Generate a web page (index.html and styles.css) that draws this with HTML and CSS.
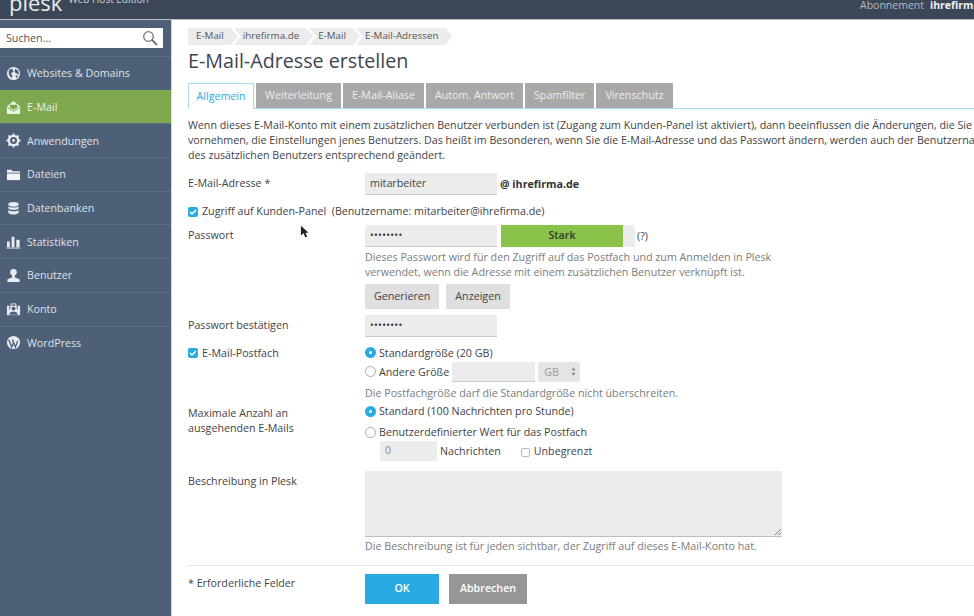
FILE: index.html
```html
<!DOCTYPE html>
<html lang="de">
<head>
<meta charset="utf-8">
<title>E-Mail-Adresse erstellen</title>
<link rel="stylesheet" href="styles.css">
</head>
<body>
<header class="topbar">
  <div class="brand"><span class="logo">plesk</span><span class="edition">Web Host Edition</span></div>
  <div class="account"><span class="sub-label">Abonnement</span><b>ihrefirma.de</b></div>
</header>
<div class="layout">
  <aside class="sidebar">
    <div class="search"><span>Suchen...</span>
      <svg class="search-icon" viewBox="0 0 16 16"><circle cx="6.5" cy="6.5" r="4.8" fill="none" stroke="#777" stroke-width="1.3"/><path d="M10 10l5 5" stroke="#777" stroke-width="2"/></svg>
    </div>
    <nav class="nav">
      <a class="nav-item"><svg viewBox="0 0 16 16"><circle cx="8" cy="8" r="7" fill="#e8ebef"/><path d="M3 4l4-1 1 3-3 2 2 2-1 3-3-4zM10 3l3 2 1 4-3-1-2-2zM10 10l3 0-2 3z" fill="#4e5f78"/></svg>Websites &amp; Domains</a>
      <a class="nav-item active"><svg viewBox="0 0 16 16"><path d="M1 7l7-6 7 6v7a1 1 0 0 1-1 1H2a1 1 0 0 1-1-1z" fill="#eef3ea"/><path d="M4 5h8v3l-4 2.500-4-2.500z" fill="#7ea84f"/><path d="M1.500 8L8 12l6.500-4" fill="none" stroke="#7ea84f"/></svg>E-Mail</a>
      <a class="nav-item"><svg viewBox="0 0 16 16"><circle cx="8" cy="8" r="5" fill="none" stroke="#e8ebef" stroke-width="2.500"/><circle cx="8" cy="8" r="1.500" fill="#e8ebef"/><path d="M8 0.500v3M8 12.500v3M0.500 8h3M12.500 8h3M2.700 2.700l2.100 2.100M11.200 11.200l2.100 2.100M2.700 13.300l2.100-2.100M11.200 4.800l2.100-2.100" stroke="#e8ebef" stroke-width="2"/></svg>Anwendungen</a>
      <a class="nav-item"><svg viewBox="0 0 16 16"><path d="M1 3h5l1 1.500h8V6H1z" fill="#e8ebef"/><path d="M1 7h14v7H1z" fill="#f4f5f7"/></svg>Dateien</a>
      <a class="nav-item"><svg viewBox="0 0 16 16"><ellipse cx="8" cy="3.500" rx="5.500" ry="2.500" fill="#e8ebef"/><path d="M2.500 5.500c1 2 10 2 11 0V8c-1 2-10 2-11 0zM2.500 9.500c1 2 10 2 11 0V12.500c-1 2.500-10 2.500-11 0z" fill="#e8ebef"/></svg>Datenbanken</a>
      <a class="nav-item"><svg viewBox="0 0 16 16"><path d="M1 8h3v6H1zM6 3h3v11H6zM11 6h3.500v8H11z" fill="#e8ebef"/><path d="M0.500 15h15" stroke="#e8ebef"/></svg>Statistiken</a>
      <a class="nav-item"><svg viewBox="0 0 16 16"><circle cx="8" cy="4.500" r="3.500" fill="#e8ebef"/><path d="M6.500 7.500h3V10l5 2v3H1.500v-3l5-2z" fill="#e8ebef"/></svg>Benutzer</a>
      <a class="nav-item"><svg viewBox="0 0 16 16"><path d="M1 4h14v10H1z" fill="#e8ebef"/><path d="M5.500 4V2h5v2" fill="none" stroke="#e8ebef"/><circle cx="8" cy="7" r="2" fill="#4e5f78"/><path d="M4 13c0-3 8-3 8 0zM4 4v4M12 4v4" fill="#4e5f78" stroke="#4e5f78"/></svg>Konto</a>
      <a class="nav-item"><svg viewBox="0 0 16 16"><circle cx="8" cy="8" r="7" fill="#e8ebef"/><path d="M3 5l3 8 2-5-1-3M7 5l3 8 2.500-6.500" fill="none" stroke="#4e5f78" stroke-width="1.400"/></svg>WordPress</a>
    </nav>
  </aside>
  <main class="main">
    <ol class="crumbs">
      <li>E-Mail</li><li>ihrefirma.de</li><li>E-Mail</li><li>E-Mail-Adressen</li>
    </ol>
    <h1 class="title">E-Mail-Adresse erstellen</h1>
    <div class="tabs">
      <a class="tab current">Allgemein</a><a class="tab">Weiterleitung</a><a class="tab">E-Mail-Aliase</a><a class="tab">Autom. Antwort</a><a class="tab">Spamfilter</a><a class="tab">Virenschutz</a>
    </div>
    <p class="intro">Wenn dieses E-Mail-Konto mit einem zusätzlichen Benutzer verbunden ist (Zugang zum Kunden-Panel ist aktiviert), dann beeinflussen die Änderungen, die Sie<br>vornehmen, die Einstellungen jenes Benutzers. Das heißt im Besonderen, wenn Sie die E-Mail-Adresse und das Passwort ändern, werden auch der Benutzername und das Passwort<br>des zusätzlichen Benutzers entsprechend geändert.</p>

    <div class="row row-mail">
      <label class="label">E-Mail-Adresse *</label>
      <div class="field inline"><span class="input">mitarbeiter</span><b class="domain">@ ihrefirma.de</b></div>
    </div>
    <div class="check-row row-panel">
      <span class="check"><svg viewBox="0 0 10 10"><path d="M2 5l2 2 4-4" fill="none" stroke="#fff" stroke-width="1.500"/></svg></span>
      <span>Zugriff auf Kunden-Panel&nbsp; (Benutzername: mitarbeiter@ihrefirma.de)</span>
    </div>
    <div class="row row-pass">
      <label class="label">Passwort</label>
      <div class="field">
        <div class="inline"><span class="input dots">••••••••</span><span class="meter"><span class="meter-fill">Stark</span></span><span class="help">(?)</span></div>
        <p class="hint two">Dieses Passwort wird für den Zugriff auf das Postfach und zum Anmelden in Plesk<br>verwendet, wenn die Adresse mit einem zusätzlichen Benutzer verknüpft ist.</p>
        <div class="inline gap7"><span class="btn">Generieren</span><span class="btn">Anzeigen</span></div>
      </div>
    </div>
    <div class="row row-confirm">
      <label class="label">Passwort bestätigen</label>
      <div class="field"><span class="input dots">••••••••</span></div>
    </div>
    <div class="row row-box">
      <div class="check-row label"><span class="check"><svg viewBox="0 0 10 10"><path d="M2 5l2 2 4-4" fill="none" stroke="#fff" stroke-width="1.500"/></svg></span><span>E-Mail-Postfach</span></div>
      <div class="field">
        <div class="radio-line line-a"><span class="radio on"></span><span>Standardgröße (20 GB)</span></div>
        <div class="radio-line line-b"><span class="radio"></span><span>Andere Größe</span><span class="input small"></span><span class="select">GB<svg viewBox="0 0 6 10"><path d="M3 0l2.500 3.500h-5zM3 10L.5 6.500h5z" fill="#888"/></svg></span></div>
        <p class="hint one">Die Postfachgröße darf die Standardgröße nicht überschreiten.</p>
      </div>
    </div>
    <div class="row row-max">
      <label class="label lines">Maximale Anzahl an<br>ausgehenden E-Mails</label>
      <div class="field">
        <div class="radio-line line-c"><span class="radio on"></span><span>Standard (100 Nachrichten pro Stunde)</span></div>
        <div class="radio-line line-d"><span class="radio"></span><span>Benutzerdefinierter Wert für das Postfach</span></div>
        <div class="inline custom"><span class="input num">0</span><span>Nachrichten</span><span class="box"></span><span>Unbegrenzt</span></div>
      </div>
    </div>
    <div class="row row-desc">
      <label class="label">Beschreibung in Plesk</label>
      <div class="field">
        <div class="textarea"><svg viewBox="0 0 8 8"><path d="M1 7l6-6M4.500 7L7 4.500" stroke="#777" fill="none"/></svg></div>
        <p class="hint one desc-hint">Die Beschreibung ist für jeden sichtbar, der Zugriff auf dieses E-Mail-Konto hat.</p>
      </div>
    </div>
    <div class="row footer">
      <label class="label">* Erforderliche Felder</label>
      <div class="field inline gap10"><span class="action ok">OK</span><span class="action cancel">Abbrechen</span></div>
    </div>
    <svg class="pointer" viewBox="0 0 10 14"><path d="M1 0v11l3-2.500 2 4.500 2-1-2-4.200h3.500z" fill="#222"/></svg>
  </main>
</div>
</body>
</html>
```
FILE: styles.css
```css
* { box-sizing: border-box; }
html, body { height: 100%; }
body {
  margin: 0;
  width: 974px;
  height: 616px;
  overflow: hidden;
  font-family: "Open Sans", "Liberation Sans", sans-serif;
  font-size: 10.7px;
  color: #3f4347;
  background: #fff;
  display: flex;
  flex-direction: column;
}
p { margin: 0; }

.topbar {
  height: 20px;
  flex: none;
  background: #3b4757;
  border-bottom: 1px solid #b9bdc2;
  display: flex;
  justify-content: space-between;
  overflow: hidden;
  color: #fff;
}
.brand { display: flex; align-items: flex-end; padding-left: 9px; height: 19px; }
.logo { font-size: 22px; line-height: 22px; margin-bottom: 6px; color: #e6ecf2; }
.edition { font-size: 10px; line-height: 10px; margin: 0 0 15px 6px; color: #cdd3da; }
.account { font-size: 10.5px; line-height: 10px; white-space: nowrap; width: 114px; display: flex; gap: 6px; }
.sub-label { color: #b6bcc4; }
.account b { color: #eef0f2; }

.layout { flex: 1; display: flex; min-height: 0; }
.sidebar { width: 172px; flex: none; background: #4e5f78; border-right: 1px solid #d6dade; padding-top: 8px; }
.search {
  width: 163px; height: 20px; background: #fff;
  display: flex; align-items: center; justify-content: space-between;
  padding: 0 5px 0 6px; color: #555;
}
.search-icon { width: 16px; height: 16px; }
.nav { margin-top: 8px; }
.nav-item {
  height: 33.7px;
  display: flex; align-items: center; gap: 6px;
  padding-left: 6px;
  border-top: 1px dotted #6b7a8e;
  color: #dfe3e8;
  white-space: nowrap;
}
.nav-item svg { width: 15px; height: 15px; flex: none; }
.nav-item.active { background: #7ea84f; border-top-color: #7ea84f; color: #eef3ea; }

.main { flex: 1; min-width: 0; padding: 8px 0 0 16px; position: relative; }
.crumbs { list-style: none; display: flex; margin: 0; padding: 0; height: 17px; }
.crumbs li {
  background: #ececec;
  height: 17px; line-height: 16px;
  padding: 0 14px 0 9px;
  color: #555; font-size: 9.8px;
  clip-path: polygon(0 0, calc(100% - 7px) 0, 100% 50%, calc(100% - 7px) 100%, 0 100%, 7px 50%);
  margin-right: -4px;
}
.crumbs li:first-child { padding-left: 8px; clip-path: polygon(0 0, calc(100% - 7px) 0, 100% 50%, calc(100% - 7px) 100%, 0 100%); }
.title { margin: 2px 0 0; font-size: 19.7px; line-height: 27px; font-weight: 400; color: #3d4650; }
.tabs { display: flex; gap: 2px; margin-top: 9px; height: 26px; border-bottom: 1px solid #a9dcf2; width: 820px; }
.tab {
  height: 25px; line-height: 25px; padding: 0 9px;
  background: #a8a8a8; color: #eee; white-space: nowrap;
}
.tab.current { background: #fff; color: #29abe2; border: 1px solid #a9dcf2; border-bottom: 0; height: 26px; line-height: 24px; padding: 0 7.5px; }
.intro { margin-top: 9px; line-height: 15px; white-space: nowrap; }

.row { display: flex; }
.label { width: 177px; flex: none; }
.field { flex: none; width: 600px; }
.inline { display: flex; align-items: center; }
.gap7 { gap: 7px; }
.gap10 { gap: 10px; }
.input {
  display: block; width: 132px; height: 22px;
  background: #ececec; border-bottom: 1px solid #c9c9c9;
  padding: 0 5px; line-height: 21px; color: #444;
}
.dots { font-size: 10px; letter-spacing: 0.3px; color: #333; }
.domain { margin-left: 3px; color: #333; }
.row-mail { margin-top: 10px; line-height: 20px; }
.check-row { display: flex; align-items: center; gap: 4px; }
.row-panel { margin-top: 5px; height: 22px; }
.check {
  width: 10px; height: 10px; background: #29abe2; border-radius: 2px; flex: none; display: flex;
}
.row-panel .check { margin-top: 2px; }
.check svg { width: 10px; height: 10px; }
.row-pass { margin-top: 3px; line-height: 20px; }
.meter { display: block; margin-left: 4px; width: 134px; height: 22px; background: #ececec; }
.meter-fill { display: block; width: 122px; height: 22px; background: #8bc34a; text-align: center; line-height: 21px; color: #333; font-weight: 600; }
.help { margin-left: 2px; }
.hint { color: #7a7d80; line-height: 15px; }
.hint.two { margin-top: 3px; white-space: nowrap; }
.btn {
  height: 25px; line-height: 25px; padding: 0 9px; background: #dfdfdf; color: #444; margin-top: 4px;
}
.row-confirm { margin-top: 6px; line-height: 20px; }
.row-box { margin-top: 6px; }
.radio-line { display: flex; align-items: center; gap: 3px; white-space: nowrap; }
.radio {
  width: 11px; height: 11px; border-radius: 50%; border: 1px solid #aaa; background: #fff; flex: none;
}
.radio.on { background: #29abe2; border: 3px solid #29abe2; }
.radio.on::after { content: ""; display: block; width: 3px; height: 3px; margin: 1px; border-radius: 50%; background: #fff; }
.line-a { height: 19px; }
.line-b { height: 19px; }
.small { width: 83px; height: 20px; }
.select {
  width: 42px; height: 20px; background: #e4e4e4; border-radius: 3px; color: #999;
  display: flex; align-items: center; justify-content: space-between; padding: 0 4px 0 6px;
}
.select svg { width: 5px; height: 9px; }
.hint.one { margin-top: 5px; }
.row-box .label { align-self: flex-start; height: 20px; }
.row-max { margin-top: 0; }
.lines { line-height: 15px; padding-top: 5px; }
.line-c { height: 20px; }
.line-d { height: 20px; padding-top: 2px; }
.custom { padding-left: 15px; height: 20px; }
.num { width: 57px; height: 20px; line-height: 19px; color: #888; border-bottom: 0; margin-right: 3px; }
.box { width: 9px; height: 9px; border: 1px solid #bbb; border-radius: 2px; margin: 2px 4px 0 20px; }
.row-desc { margin-top: 10px; }
.row-desc .label { line-height: 20px; }
.textarea {
  width: 417px; height: 66px; background: #ececec; border-bottom: 1px solid #bdbdbd;
  display: flex; justify-content: flex-end; align-items: flex-end;
}
.textarea svg { width: 8px; height: 8px; }
.hint.desc-hint { margin-top: 2px; }
.footer { margin-top: 11px; padding-top: 8px; border-top: 1px solid #e6e6e6; width: 820px; }
.footer .label { line-height: 18px; }
.action { height: 30px; line-height: 29px; text-align: center; color: #fff; font-weight: 600; }
.ok { width: 74px; background: #29abe2; }
.cancel { width: 78px; background: #969696; }
.pointer { position: absolute; left: 128px; top: 205px; width: 9px; height: 14px; }
```
